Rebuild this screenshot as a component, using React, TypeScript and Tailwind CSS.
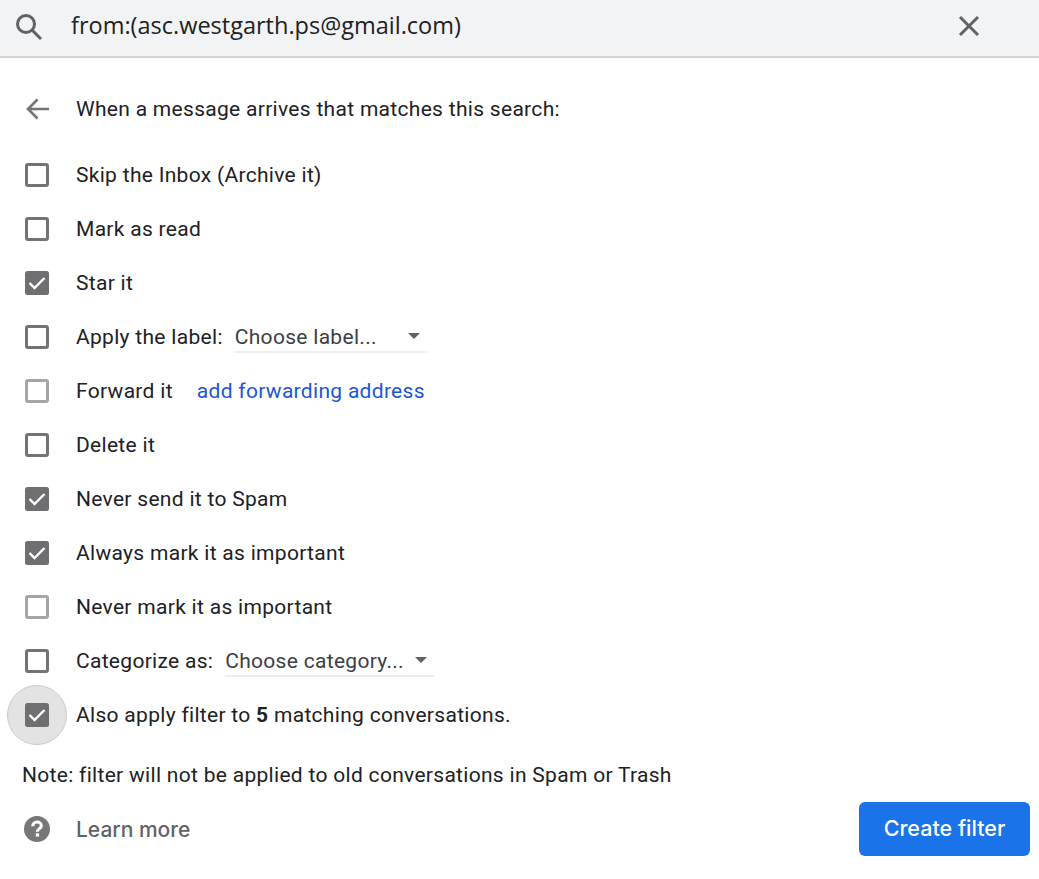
import React from "react";

function Box({ checked, light }: { checked?: boolean; light?: boolean }) {
  if (checked)
    return (
      <svg width="24" height="24" viewBox="0 0 24 24" className="relative block shrink-0">
        <rect x="0" y="0" width="24" height="24" rx="2.5" fill="#6f6f71" />
        <path d="M4.5 12 L9.5 17 L19.5 7" fill="none" stroke="#fff" strokeWidth="2.4" />
      </svg>
    );
  return (
    <div className={`w-6 h-6 shrink-0 rounded-[3px] border-[3px] bg-white ${light ? "border-[#a4a5a7]" : "border-[#737476]"}`} />
  );
}

function Row({ checked, light, halo, children }: { checked?: boolean; light?: boolean; halo?: boolean; children: React.ReactNode }) {
  return (
    <div className="h-[54px] flex items-center">
      <div className="relative w-6 h-6 shrink-0 mr-[27px]">
        {halo && <div className="absolute -left-[18px] -top-[18px] w-[60px] h-[60px] rounded-full bg-[#e3e3e4] border border-[#cbcbcc]" />}
        <div className="absolute inset-0">
          <Box checked={checked} light={light} />
        </div>
      </div>
      {children}
    </div>
  );
}

function Select({ text, width }: { text: string; width: string }) {
  return (
    <div className={`relative h-[30px] mt-[1px] flex items-center border-b-2 border-[#eceff2] text-[#3c4043] ${width}`}>
      <span className="mt-[1px]">{text}</span>
      <span className="absolute top-[10px] right-[7px] w-0 h-0 border-l-[6px] border-r-[6px] border-t-[6px] border-l-transparent border-r-transparent border-t-[#5f6368]" />
    </div>
  );
}

export default function App() {
  return (
    <div className="min-h-[879px] bg-white font-['Roboto',sans-serif] text-[21px] tracking-[0.3px] text-[#202124] leading-none">
      <header className="h-[58px] bg-[#f1f3f4] border-b-2 border-[#d3d4d6] flex items-center pl-[14px] pr-[58px]">
        <svg width="29" height="29" viewBox="0 0 29 29" fill="none" stroke="#5f6368" strokeWidth="3" className="shrink-0 mr-[28px] -mt-[4px]">
          <circle cx="12" cy="12" r="8.5" />
          <path d="M18 18 L27 27" />
        </svg>
        <span className="flex-1 -mt-[4px] font-['Open_Sans',sans-serif] text-[23.5px] tracking-normal text-[#202124]">from:(asc.westgarth.ps@gmail.com)</span>
        <svg width="24" height="24" viewBox="0 0 24 24" fill="none" stroke="#5f6368" strokeWidth="3" className="shrink-0 -mt-[4px]">
          <path d="M3 3 L21 21 M21 3 L3 21" />
        </svg>
      </header>
      <main className="pl-[25px] pr-[9px]">
        <div className="h-[54px] mt-[24px] mb-[12px] flex items-center">
          <svg width="24" height="24" viewBox="0 0 24 24" fill="none" stroke="#737476" strokeWidth="2.6" className="shrink-0 mr-[27px]">
            <path d="M24 12 H3 M12.5 2.5 L3 12 L12.5 21.5" />
          </svg>
          <span>When a message arrives that matches this search:</span>
        </div>
        <Row>Skip the Inbox (Archive it)</Row>
        <Row>Mark as read</Row>
        <Row checked>Star it</Row>
        <Row>
          <span className="mr-3">Apply the label:</span>
          <Select text="Choose label..." width="w-[192px]" />
        </Row>
        <Row light>
          <span>Forward it</span>
          <a className="ml-6 text-[#1a56d6]">add forwarding address</a>
        </Row>
        <Row>Delete it</Row>
        <Row checked>Never send it to Spam</Row>
        <Row checked>Always mark it as important</Row>
        <Row light>Never mark it as important</Row>
        <Row>
          <span className="mr-3">Categorize as:</span>
          <Select text="Choose category..." width="w-[209px]" />
        </Row>
        <Row checked halo>
          <span>
            Also apply filter to <b className="font-bold">5</b> matching conversations.
          </span>
        </Row>
        <div className="-ml-[3px] mt-[6px] h-[54px] flex items-center">Note: filter will not be applied to old conversations in Spam or Trash</div>
        <div className="h-[54px] flex items-center justify-between">
          <div className="flex items-center">
            <svg width="26" height="26" viewBox="0 0 24 24" className="shrink-0 -ml-[1px] mr-[26px]">
              <circle cx="12" cy="12" r="12" fill="#777779" />
              <path d="M8 9.5 C8 7 10 5.5 12 5.5 C14.2 5.5 16 7 16 9 C16 11.6 12.4 11.8 12.4 14.6" fill="none" stroke="#fff" strokeWidth="2.8" />
              <rect x="10.9" y="16" width="3" height="3" fill="#fff" />
            </svg>
            <span className="font-['Inter',sans-serif] font-medium text-[21px] tracking-normal text-[#5f6368]">Learn more</span>
          </div>
          <button className="w-[171px] h-[54px] rounded-[6px] bg-[#1a73e8] text-white font-['Inter',sans-serif] font-medium text-[21.5px] tracking-normal">Create filter</button>
        </div>
      </main>
    </div>
  );
}
